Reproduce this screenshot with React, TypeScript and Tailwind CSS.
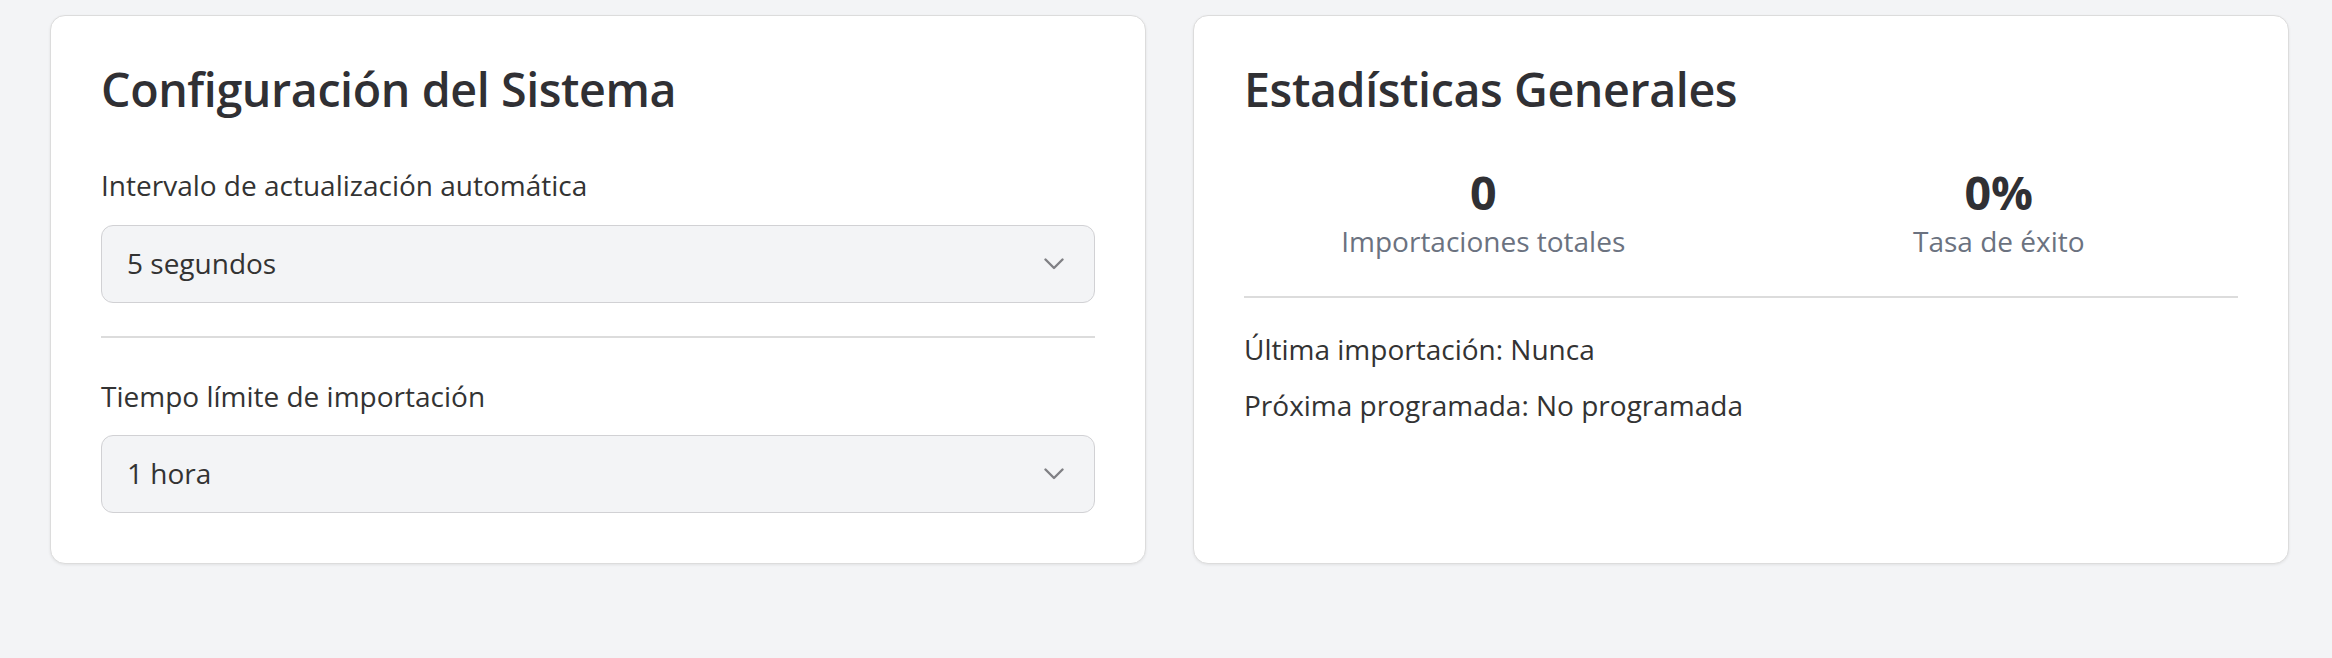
import React from 'react';

const SelectBox: React.FC<{ value: string }> = ({ value }) => (
  <div className="flex items-center justify-between h-[78px] pl-[25px] pr-[30px] bg-[#f3f4f6] border border-[#d1d1d4] rounded-[12px] text-[28px] leading-[43.5px] text-[#333]">
    <span>{value}</span>
    <svg width="20" height="12" viewBox="0 0 20 12" fill="none" className="text-[#808085]">
      <path d="M1.5 1.5 L10 10 L18.5 1.5" stroke="currentColor" strokeWidth="2.4" strokeLinecap="round" strokeLinejoin="round" />
    </svg>
  </div>
);

const Card: React.FC<{ children: React.ReactNode }> = ({ children }) => (
  <div className="bg-white border border-[#dcdcdc] rounded-[15px] p-[50px] shadow-[0_1px_3px_rgba(0,0,0,0.08)]">
    {children}
  </div>
);

const App: React.FC = () => {
  return (
    <div className="min-h-screen bg-[#f3f4f6] pt-[15px] pl-[50px] pr-[43px] font-['Open_Sans',sans-serif] text-[#333]">
      <div className="grid grid-cols-2 gap-[47px]">
        <Card>
          <h2 className="text-[46.6px] leading-[46px] font-semibold tracking-[-0.4px] text-[#303034] mb-[52px]">
            Configuración del Sistema
          </h2>
          <label className="block text-[28px] leading-[43.5px] mb-[17.5px]">Intervalo de actualización automática</label>
          <SelectBox value="5 segundos" />
          <div className="mt-[33px] border-t-2 border-[#dcdcdc] pt-[36.5px]">
            <label className="block text-[28px] leading-[43.5px] mb-[17px]">Tiempo límite de importación</label>
            <SelectBox value="1 hora" />
          </div>
        </Card>

        <Card>
          <h2 className="text-[46.6px] leading-[46px] font-semibold tracking-[-0.4px] text-[#303034] mb-[52px]">
            Estadísticas Generales
          </h2>
          <div className="grid grid-cols-2 gap-x-[37px] text-center pb-[32.5px] border-b-2 border-[#dcdcdc]">
            <div>
              <div className="text-[46.6px] leading-[56px] font-bold text-[#303034]">0</div>
              <div className="text-[28px] leading-[43.5px] text-[#6b7280]">Importaciones totales</div>
            </div>
            <div>
              <div className="text-[46.6px] leading-[56px] font-bold text-[#303034]">0%</div>
              <div className="text-[28px] leading-[43.5px] text-[#6b7280]">Tasa de éxito</div>
            </div>
          </div>
          <div className="pt-[29.5px] flex flex-col gap-[12.5px] text-[28px] leading-[43.5px]">
            <p>Última importación: Nunca</p>
            <p>Próxima programada: No programada</p>
          </div>
        </Card>
      </div>
    </div>
  );
};

export default App;
